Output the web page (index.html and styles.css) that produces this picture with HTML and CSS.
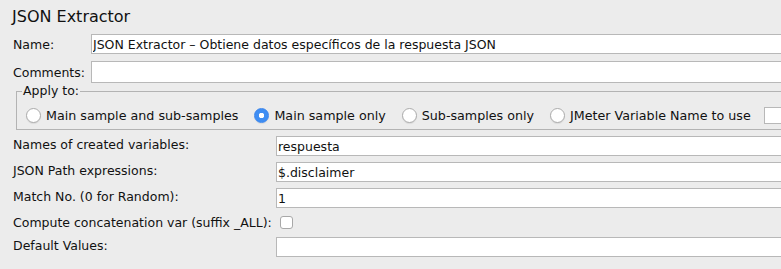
FILE: index.html
```html
<!DOCTYPE html>
<html lang="en">
<head>
    <meta charset="UTF-8">
    <meta name="viewport" content="width=device-width, initial-scale=1.0">
    <title>JSON Extractor</title>
    <link rel="stylesheet" href="styles.css">
</head>
<body>
    <div class="panel">
        <h1 class="title">JSON Extractor</h1>

        <div class="field-row">
            <label class="field-label" for="name">Name:</label>
            <input class="text-input" type="text" id="name" value="JSON Extractor – Obtiene datos específicos de la respuesta JSON">
        </div>
        <div class="field-row comments">
            <label class="field-label" for="comments">Comments:</label>
            <textarea class="text-input" id="comments"></textarea>
        </div>

        <fieldset class="apply-to">
            <legend>Apply to:</legend>
            <div class="radio-row">
                <label class="radio"><span class="radio-dot"></span>Main sample and sub-samples</label>
                <label class="radio"><span class="radio-dot checked"></span>Main sample only</label>
                <label class="radio"><span class="radio-dot"></span>Sub-samples only</label>
                <label class="radio"><span class="radio-dot"></span>JMeter Variable Name to use</label>
                <input class="text-input var-name" type="text">
            </div>
        </fieldset>

        <div class="props">
            <label class="prop-label">Names of created variables:</label>
            <input class="text-input" type="text" value="respuesta">

            <label class="prop-label">JSON Path expressions:</label>
            <input class="text-input" type="text" value="$.disclaimer">

            <label class="prop-label">Match No. (0 for Random):</label>
            <input class="text-input" type="text" value="1">

            <label class="prop-label">Compute concatenation var (suffix _ALL):</label>
            <span class="checkbox"></span>

            <label class="prop-label">Default Values:</label>
            <input class="text-input" type="text">
        </div>
    </div>
</body>
</html>
```

FILE: styles.css
```css
body {
    margin: 0;
    overflow: hidden;
    background-color: #ececec;
    font-family: "DejaVu Sans", sans-serif;
    font-size: 12.5px;
    color: #111;
}

/* fields run off the right edge in the original window */
.panel {
    padding-top: 7px;
}

.title {
    margin: 0 0 7px 12px;
    font-size: 16px;
    font-weight: normal;
    line-height: 20px;
}

.field-row {
    display: flex;
    align-items: center;
    margin-left: 13px;
}

.field-row.comments {
    margin-top: 7px;
}

.field-label {
    width: 78px;
    flex: none;
}

.text-input {
    box-sizing: border-box;
    flex: 1;
    width: 0;
    min-width: 0;
    height: 20px;
    margin: 0;
    padding: 0 1px;
    border: 1px solid #b8b8b8;
    border-right: none;
    background-color: #fff;
    font-family: inherit;
    font-size: 12.5px;
    color: #111;
    outline: none;
}

textarea.text-input {
    height: 22px;
    resize: none;
}

.apply-to {
    min-width: 0;
    margin: 0 0 0 16px;
    padding: 0 0 5px 9px;
    border: 1px solid #b3b3b3;
    border-right: none;
}

.apply-to legend {
    margin-left: -4px;
    padding: 0 1px;
    line-height: 16px;
}

.radio-row {
    display: flex;
    align-items: center;
    height: 18px;
    padding-top: 7px;
}

.radio {
    display: flex;
    align-items: center;
    margin-right: 16px;
    font-size: 12.7px;
    white-space: nowrap;
}

.radio-dot {
    box-sizing: border-box;
    width: 15px;
    height: 15px;
    margin-right: 5px;
    border: 1px solid #ababab;
    border-radius: 50%;
    background-color: #fff;
    box-shadow: 0 1px 1px rgba(0, 0, 0, 0.08);
}

.radio-dot.checked {
    border-color: #3a85ec;
    background: radial-gradient(circle, #fff 0 2.5px, #3f8ef3 3px);
}

.var-name {
    height: 17px;
    margin-left: -3px;
}

.props {
    display: grid;
    grid-template-columns: 263px minmax(0, 1fr);
    grid-template-rows: 20px 20px 20px 17px 20px;
    row-gap: 6px;
    align-items: center;
    margin: 6px 0 0 13px;
}

.props .text-input {
    width: auto;
    height: 20px;
}

.prop-label {
    white-space: nowrap;
    align-self: start;
    line-height: 17px;
}

.checkbox {
    box-sizing: border-box;
    width: 13px;
    height: 13px;
    margin-left: 4px;
    border: 1px solid #a8a8a8;
    border-radius: 3px;
    background-color: #fff;
}
```
